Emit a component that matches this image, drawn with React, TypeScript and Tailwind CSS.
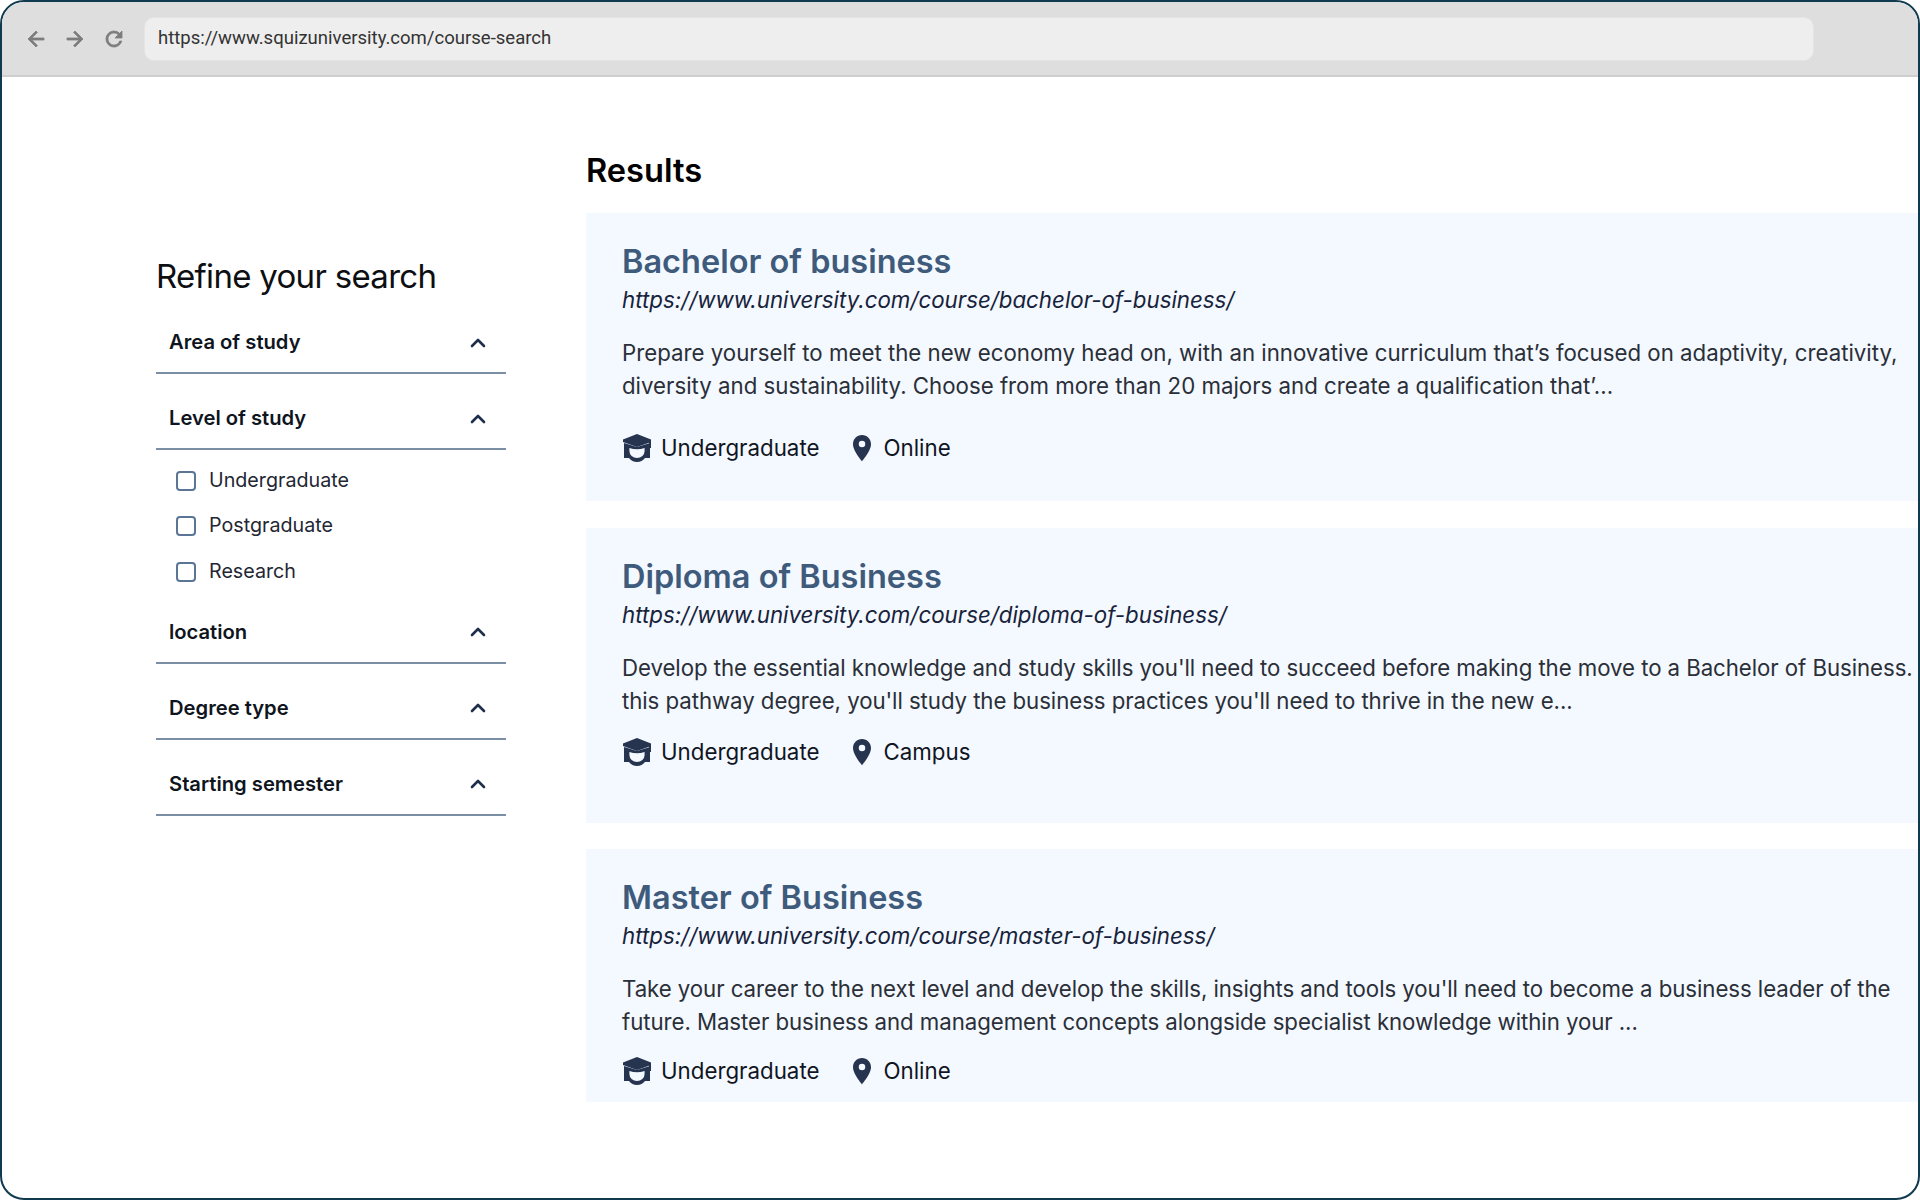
import React from 'react';
import { ChevronUp } from 'lucide-react';

const sans = "font-['Inter','Liberation_Sans',sans-serif]";

function GradCap() {
  return (
    <svg viewBox="0 0 30 28" className="h-[28px] w-[30px] shrink-0" fill="#26344f">
      {/* board */}
      <path d="M15 0 L29 5.5 L29 8 L15 13 L1 8 L1 5.5 Z" />
      {/* tassel */}
      <path d="M27 7 h2 v7 h-2 z" />
      {/* head */}
      <path d="M2 9 L15 13 L28 9 L28 24 L23 24 Q20 28 15 28 Q10 28 7 24 L2 24 Z" />
      <path d="M7.4 14 Q15 16.5 22.6 14 L22.6 17 A7.6 7 0 0 1 7.4 17 Z" fill="#f4f8ff" />
    </svg>
  );
}

function Pin() {
  return (
    <svg viewBox="0 0 24 24" className="h-[30px] w-[30px] shrink-0" fill="#26344f">
      <path d="M12 1.5C7.9 1.5 4.8 4.7 4.8 8.9c0 5.3 7.2 13.6 7.2 13.6s7.2-8.3 7.2-13.6c0-4.2-3.1-7.4-7.2-7.4zm0 9.9a2.6 2.6 0 0 1 0-5.2 2.6 2.6 0 0 1 0 5.2z" />
    </svg>
  );
}

function FilterHead({ label, className }: { label: string; className: string }) {
  return (
    <div className={`flex h-[62px] items-center justify-between border-b-2 border-[#7b8ea3] pl-[13px] pr-[16px] pt-[1px] ${className}`}>
      <span className="text-[20.2px] font-semibold text-[#0f1520]">{label}</span>
      <ChevronUp className="h-[24px] w-[24px] text-[#1e2f4d]" strokeWidth={2.6} />
    </div>
  );
}

function CheckRow({ label }: { label: string }) {
  return (
    <label className="flex h-[45.5px] items-center pl-[20px]">
      <span className="h-[20px] w-[20px] rounded-[4px] border-2 border-[#5b7695] bg-white" />
      <span className="ml-[13px] text-[19.7px] text-[#1f2733]">{label}</span>
    </label>
  );
}

function Card({
  title,
  url,
  lines,
  place,
  className,
  descClass,
  metaClass,
}: {
  title: string;
  url: string;
  lines: string[];
  place: string;
  className: string;
  descClass: string;
  metaClass: string;
}) {
  return (
    <div className={`overflow-hidden bg-[#f4f8ff] pl-[36px] pt-[27px] ${className}`}>
      <h3 className="h-[43px] text-[32.5px] leading-[43px] font-semibold text-[#3f5b7c]">{title}</h3>
      <div className="h-[33px] text-[22.3px] leading-[33px] text-[#17233a] italic">{url}</div>
      <div className={`mt-[20px] text-[22.25px] leading-[33px] whitespace-nowrap text-[#2a2f38] ${descClass}`}>
        {lines.map((line) => (
          <div key={line}>{line}</div>
        ))}
      </div>
      <div className={`flex h-[32px] items-center text-[22.3px] text-[#10151f] ${metaClass}`}>
        <GradCap />
        <span className="ml-[9px]">Undergraduate</span>
        <span className="ml-[28px]"><Pin /></span>
        <span className="ml-[6px]">{place}</span>
      </div>
    </div>
  );
}

export default function App() {
  return (
    <div className={`${sans} h-[1200px] w-[1920px] overflow-hidden rounded-[24px] border-2 border-[#0f3a4f] bg-white`}>
      {/* Browser bar */}
      <div className="flex h-[75px] items-center border-b-2 border-[#cfcfcf] bg-[#dedede] pl-[22px]">
        <svg viewBox="0 0 24 24" className="h-[24px] w-[24px]" fill="#7d7d7d" stroke="#7d7d7d" strokeWidth="0.8">
          <path d="M20 11H7.83l5.59-5.59L12 4l-8 8 8 8 1.41-1.41L7.83 13H20v-2z" />
        </svg>
        <svg viewBox="0 0 24 24" className="ml-[15px] h-[24px] w-[24px]" fill="#7d7d7d" stroke="#7d7d7d" strokeWidth="0.8">
          <path d="M12 4l-1.41 1.41L16.17 11H4v2h12.17l-5.58 5.59L12 20l8-8z" />
        </svg>
        <svg viewBox="0 0 24 24" className="ml-[15px] h-[24px] w-[24px]" fill="#7d7d7d" stroke="#7d7d7d" strokeWidth="0.8">
          <path d="M17.65 6.35A7.958 7.958 0 0 0 12 4c-4.42 0-7.99 3.58-7.99 8s3.57 8 7.99 8c3.73 0 6.84-2.55 7.73-6h-2.08A5.99 5.99 0 0 1 12 18c-3.31 0-6-2.69-6-6s2.69-6 6-6c1.66 0 3.14.69 4.22 1.78L13 11h7V4l-2.35 2.35z" />
        </svg>
        <div className="ml-[18px] flex h-[44px] w-[1670px] items-center rounded-[10px] border border-[#e4e4e4] bg-[#eeeeee] pl-[13px] font-['Roboto',sans-serif] text-[18.55px] text-[#333333]">
          https://www.squizuniversity.com/course-search
        </div>
      </div>

      <div className="flex">
        {/* Filters */}
        <aside className="ml-[154px] w-[350px] shrink-0 pt-[174px]">
          <h2 className="h-[50px] text-[33px] leading-[50px] tracking-[-0.7px] text-[#0d0f12]">Refine your search</h2>
          <FilterHead label="Area of study" className="mt-[11px]" />
          <FilterHead label="Level of study" className="mt-[14px]" />
          <div className="pt-[8px]">
            <CheckRow label="Undergraduate" />
            <CheckRow label="Postgraduate" />
            <CheckRow label="Research" />
          </div>
          <FilterHead label="location" className="mt-[7px]" />
          <FilterHead label="Degree type" className="mt-[14px]" />
          <FilterHead label="Starting semester" className="mt-[14px]" />
        </aside>

        {/* Results */}
        <main className="ml-[80px] min-w-0 flex-1 pt-[69px]">
          <h2 className="h-[48px] text-[32.6px] leading-[48px] font-semibold text-black">Results</h2>
          <div className="mt-[19px] flex flex-col">
            <Card
              title="Bachelor of business"
              url="https://www.university.com/course/bachelor-of-business/"
              lines={[
                'Prepare yourself to meet the new economy head on, with an innovative curriculum that’s focused on adaptivity, creativity,',
                'diversity and sustainability. Choose from more than 20 majors and create a qualification that’...',
              ]}
              place="Online"
              className="h-[288px]"
              descClass=""
              metaClass="mt-[30px]"
            />
            <Card
              title="Diploma of Business"
              url="https://www.university.com/course/diploma-of-business/"
              lines={[
                "Develop the essential knowledge and study skills you'll need to succeed before making the move to a Bachelor of Business.",
                "this pathway degree, you'll study the business practices you'll need to thrive in the new e...",
              ]}
              place="Campus"
              className="mt-[27px] h-[295px]"
              descClass="tracking-[-0.07px]"
              metaClass="mt-[19px]"
            />
            <Card
              title="Master of Business"
              url="https://www.university.com/course/master-of-business/"
              lines={[
                "Take your career to the next level and develop the skills, insights and tools you'll need to become a business leader of the",
                "future. Master business and management concepts alongside specialist knowledge within your ...",
              ]}
              place="Online"
              className="mt-[26px] h-[253px]"
              descClass="tracking-[-0.07px]"
              metaClass="mt-[17px]"
            />
          </div>
        </main>
      </div>
    </div>
  );
}
